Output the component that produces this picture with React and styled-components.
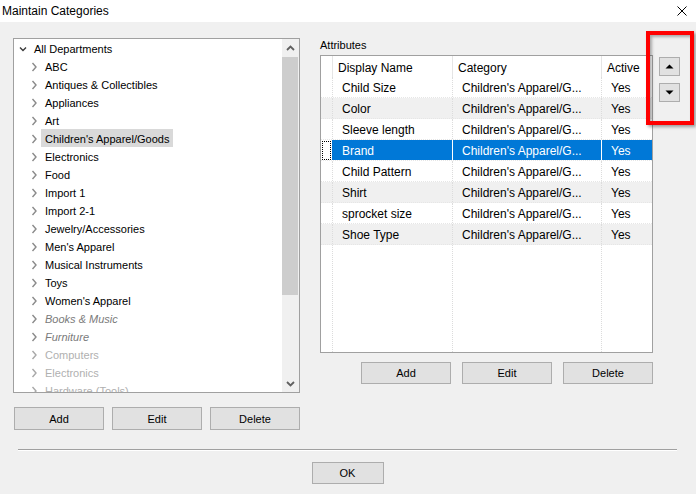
import React from 'react';
import styled, { createGlobalStyle, css } from 'styled-components';

const Global = createGlobalStyle`
  html, body { margin: 0; padding: 0; background: #f0f0f0; }
  body { font-family: "Liberation Sans", Arial, sans-serif; color: #000; }
  * { box-sizing: border-box; }
`;

const Window = styled.div`
  position: relative;
  width: 696px;
  height: 494px;
  background: #f0f0f0;
  overflow: hidden;
  display: flex;
  flex-direction: column;
`;

const TitleBar = styled.div`
  height: 22px;
  flex: none;
  background: #fff;
  display: flex;
  align-items: center;
  justify-content: space-between;
  padding: 0 9px 0 2px;
  font-size: 12px;
`;

const CloseIcon = styled.svg`
  width: 10px;
  height: 10px;
  display: block;
`;

const Content = styled.div`
  display: flex;
  padding: 16px 0 0 13px;
`;

const LeftCol = styled.div`
  width: 287px;
  display: flex;
  flex-direction: column;
`;

const Tree = styled.div`
  height: 355px;
  border: 1px solid #a0a0a0;
  background: #fff;
  display: flex;
`;

const TreeList = styled.div`
  flex: 1;
  overflow: hidden;
  font-size: 11px;
`;

const TreeRow = styled.div`
  height: 18px;
  display: flex;
  align-items: center;
  padding-top: 1px;
  padding-left: ${p => 3 + p.$level * 11}px;
  white-space: nowrap;
`;

const Chevron = styled.svg`
  width: 12px;
  height: 10px;
  flex: none;
  display: block;
`;

const TreeLabel = styled.span`
  height: 18px;
  line-height: 18px;
  padding: 0 4px;
  margin-left: 1px;
  margin-top: -1px;
  padding-top: 1px;
  background: ${p => (p.$selected ? '#d9d9d9' : 'transparent')};
  color: ${p => (p.$state === 'italic' ? '#7a7a7a' : p.$state === 'disabled' ? '#b0b0b0' : '#000')};
  font-style: ${p => (p.$state === 'italic' ? 'italic' : 'normal')};
`;

const ScrollBar = styled.div`
  width: 17px;
  flex: none;
  background: #f0f0f0;
  display: flex;
  flex-direction: column;
`;

const ScrollArrow = styled.div`
  height: 17px;
  flex: none;
  display: flex;
  align-items: center;
  justify-content: center;
`;

const ScrollTrack = styled.div`
  flex: 1;
  display: flex;
  flex-direction: column;
  padding: 1px 1px 0 0;
`;

const Thumb = styled.div`
  height: 238px;
  background: #cdcdcd;
`;

const ButtonRow = styled.div`
  display: flex;
  justify-content: ${p => (p.$end ? 'flex-end' : 'space-between')};
  gap: ${p => (p.$end ? '11px' : '0')};
  margin-top: ${p => p.$mt}px;
  padding-left: ${p => (p.$end ? 0 : 1)}px;
`;

const Button = styled.button`
  width: ${p => p.$w || 90}px;
  height: ${p => p.$h || 23}px;
  background: #e1e1e1;
  border: 1px solid #adadad;
  border-radius: 0;
  font-family: "Liberation Sans", Arial, sans-serif;
  font-size: 11px;
  color: #000;
  padding: 0;
  display: flex;
  align-items: center;
  justify-content: center;
`;

const RightCol = styled.div`
  width: 333px;
  margin-left: 20px;
  display: flex;
  flex-direction: column;
`;

const SectionLabel = styled.div`
  font-size: 11px;
  line-height: 14px;
  height: 14px;
  margin-bottom: 3px;
`;

const Table = styled.div`
  height: 298px;
  border: 1px solid #a0a0a0;
  background: #fff;
  display: flex;
  flex-direction: column;
  overflow: hidden;
  font-size: 12px;
`;

const gridCols = css`
  display: grid;
  grid-template-columns: 11px 120px 149px 1fr;
`;

const HeaderRow = styled.div`
  ${gridCols};
  height: 21px;
  flex: none;
  background: #fff;
`;

const HeadCell = styled.div`
  display: flex;
  align-items: center;
  padding-top: 2px;
  padding-left: ${p => (p.$blank ? 0 : 5)}px;
  border-left: ${p => (p.$blank ? 'none' : '1px solid #e5e5e5')};
  white-space: nowrap;
`;

const DataRow = styled.div`
  ${gridCols};
  height: 21px;
  flex: none;
  background: ${p => (p.$alt ? '#f0f0f0' : '#fff')};
  border-bottom: 1px dotted #e6e6e6;
`;

const Cell = styled.div`
  display: flex;
  align-items: center;
  padding-top: 2px;
  padding-left: 9px;
  white-space: nowrap;
  overflow: hidden;
  border-left: 1px dotted #dcdcdc;
  ${p =>
    p.$sel &&
    css`
      background: #0078d7;
      color: #fff;
      border-left: 1px solid ${p.$first ? '#0078d7' : '#fff'};
    `}
`;

const RowHeadCell = styled.div`
  display: flex;
  align-items: center;
  justify-content: center;
  background: ${p => (p.$sel ? '#fff' : 'transparent')};
`;

const FocusRect = styled.div`
  width: 9px;
  height: 19px;
  border: 1px dotted #000;
`;

const Filler = styled.div`
  ${gridCols};
  flex: 1;
`;

const FillerCell = styled.div`
  border-left: ${p => (p.$blank ? 'none' : '1px dotted #dcdcdc')};
`;

const SideCol = styled.div`
  margin-left: 6px;
  padding-top: 19px;
  display: flex;
  flex-direction: column;
  gap: 7px;
`;

const MoveButton = styled.button`
  width: 21px;
  height: 19px;
  background: #e1e1e1;
  border: 1px solid #adadad;
  border-radius: 0;
  padding: 0;
  display: flex;
  align-items: center;
  justify-content: center;
`;

const Separator = styled.div`
  margin: 19px 19px 0 18px;
  border-top: 1px solid #a0a0a0;
  border-bottom: 1px solid #fff;
`;

const Footer = styled.div`
  display: flex;
  justify-content: center;
  margin-top: 11px;
  padding-right: 1px;
`;

const Callout = styled.div`
  position: absolute;
  left: 646px;
  top: 31px;
  width: 48px;
  height: 94px;
  border: 4px solid #ff0000;
  box-shadow: 2px 2px 3px rgba(0, 0, 0, 0.35), inset 2px 2px 3px rgba(0, 0, 0, 0.3);
  pointer-events: none;
`;

const treeItems = [
  { label: 'ABC' },
  { label: 'Antiques & Collectibles' },
  { label: 'Appliances' },
  { label: 'Art' },
  { label: "Children's Apparel/Goods", selected: true },
  { label: 'Electronics' },
  { label: 'Food' },
  { label: 'Import 1' },
  { label: 'Import 2-1' },
  { label: 'Jewelry/Accessories' },
  { label: "Men's Apparel" },
  { label: 'Musical Instruments' },
  { label: 'Toys' },
  { label: "Women's Apparel" },
  { label: 'Books & Music', state: 'italic' },
  { label: 'Furniture', state: 'italic' },
  { label: 'Computers', state: 'disabled' },
  { label: 'Electronics', state: 'disabled' },
  { label: 'Hardware (Tools)', state: 'disabled' },
];

const attributes = [
  'Child Size',
  'Color',
  'Sleeve length',
  'Brand',
  'Child Pattern',
  'Shirt',
  'sprocket size',
  'Shoe Type',
];

const ChevronRight = ({ color = '#8a8a8a' }) => (
  <Chevron viewBox="0 0 12 10">
    <polyline points="4.5,1 8,5 4.5,9" fill="none" stroke={color} strokeWidth="1.4" />
  </Chevron>
);

const ChevronDown = () => (
  <Chevron viewBox="0 0 12 10">
    <polyline points="3,3.5 6,6.5 9,3.5" fill="none" stroke="#3a3a3a" strokeWidth="1.4" />
  </Chevron>
);

const ScrollGlyph = ({ up }) => (
  <svg width="9" height="6" viewBox="0 0 9 6">
    <polyline
      points={up ? '1,5 4.5,1.5 8,5' : '1,1 4.5,4.5 8,1'}
      fill="none"
      stroke="#606060"
      strokeWidth="1.8"
    />
  </svg>
);

const Triangle = ({ up }) => (
  <svg width="9" height="5" viewBox="0 0 9 5">
    <polygon points={up ? '0.5,4.5 4.5,0.5 8.5,4.5' : '0.5,0.5 8.5,0.5 4.5,4.5'} fill="#000" />
  </svg>
);

export default function App() {
  return (
    <>
      <Global />
      <Window>
        <TitleBar>
          <span>Maintain Categories</span>
          <CloseIcon viewBox="0 0 10 10">
            <line x1="0.5" y1="0.5" x2="9.5" y2="9.5" stroke="#000" strokeWidth="1" />
            <line x1="9.5" y1="0.5" x2="0.5" y2="9.5" stroke="#000" strokeWidth="1" />
          </CloseIcon>
        </TitleBar>

        <Content>
          <LeftCol>
            <Tree>
              <TreeList>
                <TreeRow $level={0}>
                  <ChevronDown />
                  <TreeLabel>All Departments</TreeLabel>
                </TreeRow>
                {treeItems.map((it, i) => (
                  <TreeRow key={i} $level={1}>
                    <ChevronRight color={it.state === 'disabled' ? '#a8a8a8' : '#8a8a8a'} />
                    <TreeLabel $selected={it.selected} $state={it.state}>
                      {it.label}
                    </TreeLabel>
                  </TreeRow>
                ))}
              </TreeList>
              <ScrollBar>
                <ScrollArrow>
                  <ScrollGlyph up />
                </ScrollArrow>
                <ScrollTrack>
                  <Thumb />
                </ScrollTrack>
                <ScrollArrow>
                  <ScrollGlyph />
                </ScrollArrow>
              </ScrollBar>
            </Tree>
            <ButtonRow $mt={14}>
              <Button>Add</Button>
              <Button>Edit</Button>
              <Button>Delete</Button>
            </ButtonRow>
          </LeftCol>

          <RightCol>
            <SectionLabel>Attributes</SectionLabel>
            <Table>
              <HeaderRow>
                <HeadCell $blank />
                <HeadCell>Display Name</HeadCell>
                <HeadCell>Category</HeadCell>
                <HeadCell>Active</HeadCell>
              </HeaderRow>
              {attributes.map((name, i) => {
                const sel = name === 'Brand';
                return (
                  <DataRow key={name} $alt={i % 2 === 1 && !sel}>
                    <RowHeadCell $sel={sel}>{sel && <FocusRect />}</RowHeadCell>
                    <Cell $sel={sel} $first>
                      {name}
                    </Cell>
                    <Cell $sel={sel}>Children's Apparel/G...</Cell>
                    <Cell $sel={sel}>Yes</Cell>
                  </DataRow>
                );
              })}
              <Filler>
                <FillerCell $blank />
                <FillerCell />
                <FillerCell />
                <FillerCell />
              </Filler>
            </Table>
            <ButtonRow $end $mt={9}>
              <Button $h={22}>Add</Button>
              <Button $h={22}>Edit</Button>
              <Button $h={22}>Delete</Button>
            </ButtonRow>
          </RightCol>

          <SideCol>
            <MoveButton>
              <Triangle up />
            </MoveButton>
            <MoveButton>
              <Triangle />
            </MoveButton>
          </SideCol>
        </Content>

        <Separator />
        <Footer>
          <Button $w={72} $h={22}>OK</Button>
        </Footer>

        <Callout />
      </Window>
    </>
  );
}
